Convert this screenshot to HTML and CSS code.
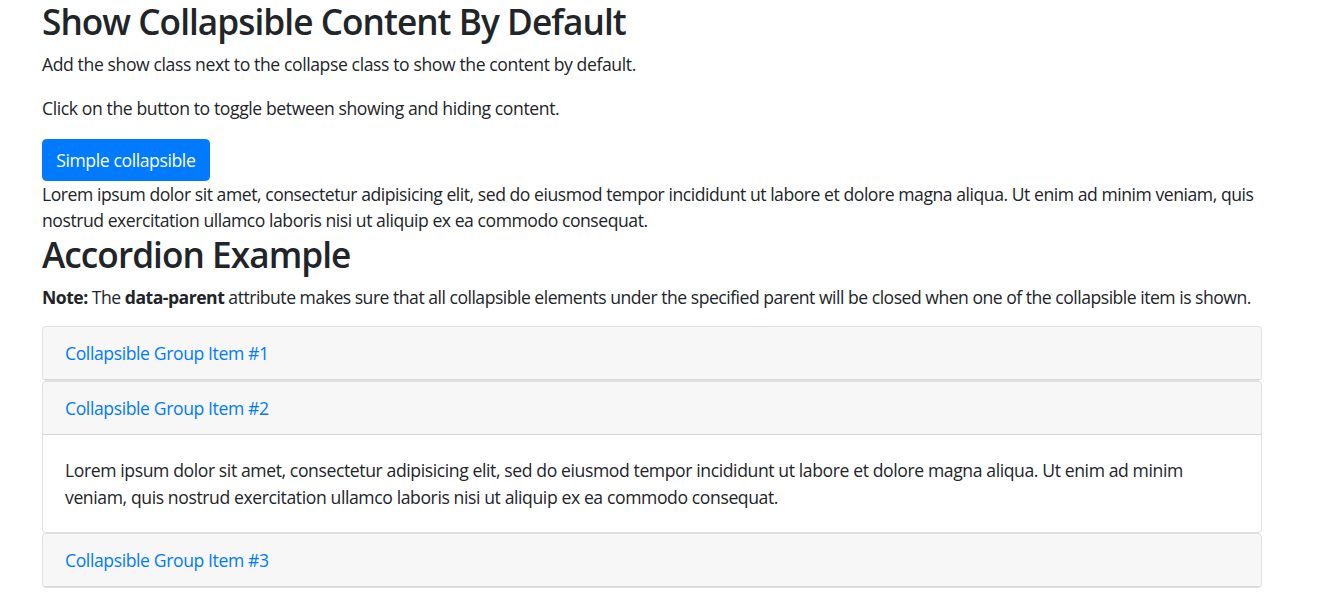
FILE: index.html
```html
<!DOCTYPE html>
<html lang="en">
<head>
<meta charset="utf-8">
<title>Collapsible</title>
<link rel="stylesheet" href="styles.css">
</head>
<body>
<div class="container">
  <h2>Show Collapsible Content By Default</h2>
  <p>Add the show class next to the collapse class to show the content by default.</p>
  <p>Click on the button to toggle between showing and hiding content.</p>
  <button class="btn" type="button">Simple collapsible</button>
  <div class="collapse">Lorem ipsum dolor sit amet, consectetur adipisicing elit, sed do eiusmod tempor incididunt ut labore et dolore magna aliqua. Ut enim ad minim veniam, quis nostrud exercitation ullamco laboris nisi ut aliquip ex ea commodo consequat.</div>

  <h2>Accordion Example</h2>
  <p class="note"><strong>Note:</strong> The <strong>data-parent</strong> attribute makes sure that all collapsible elements under the specified parent will be closed when one of the collapsible item is shown.</p>
  <div class="accordion">
    <div class="card">
      <div class="card-header"><a class="card-link" href="#">Collapsible Group Item #1</a></div>
    </div>
    <div class="card">
      <div class="card-header"><a class="card-link" href="#">Collapsible Group Item #2</a></div>
      <div class="card-body">Lorem ipsum dolor sit amet, consectetur adipisicing elit, sed do eiusmod tempor incididunt ut labore et dolore magna aliqua. Ut enim ad minim veniam, quis nostrud exercitation ullamco laboris nisi ut aliquip ex ea commodo consequat.</div>
    </div>
    <div class="card">
      <div class="card-header"><a class="card-link" href="#">Collapsible Group Item #3</a></div>
    </div>
  </div>
</div>
</body>
</html>
```
FILE: styles.css
```css
* { box-sizing: border-box; }
body {
  margin: 0;
  font-family: "Open Sans", "Noto Sans", "Liberation Sans", sans-serif;
  font-size: 17.6px;
  line-height: 26.4px;
  letter-spacing: -0.4px;
  color: #212529;
  background: #fff;
}
.container {
  width: 1220px;
  margin-left: 42px;
}
h2 {
  margin: 0 0 8.8px;
  font-size: 35.2px;
  line-height: 42.24px;
  font-weight: 600;
  letter-spacing: -0.95px;
}
p { margin: 0 0 17.6px; }
.note { letter-spacing: -0.5px; margin-bottom: 15.4px; }
strong { font-weight: 700; }
.btn {
  display: inline-block;
  font-family: inherit;
  font-size: 17.6px;
  line-height: 26.4px;
  letter-spacing: -0.4px;
  padding: 6.6px 13.2px;
  color: #fff;
  background: #007bff;
  border: 1px solid #007bff;
  border-radius: 4.4px;
  vertical-align: top;
}
.collapse { display: block; letter-spacing: -0.46px; }
.accordion { display: flex; flex-direction: column; }
.card {
  border: 1px solid rgba(0,0,0,.125);
  border-radius: 4.4px;
  background: #fff;
  overflow: hidden;
}
.card-header {
  padding: 13px 22px 12.6px;
  background: rgba(0,0,0,.03);
  border-bottom: 1px solid rgba(0,0,0,.125);
}
.card-link { color: #007bff; text-decoration: none; }
.card-body { padding: 22px 22px 21.6px; }
```
